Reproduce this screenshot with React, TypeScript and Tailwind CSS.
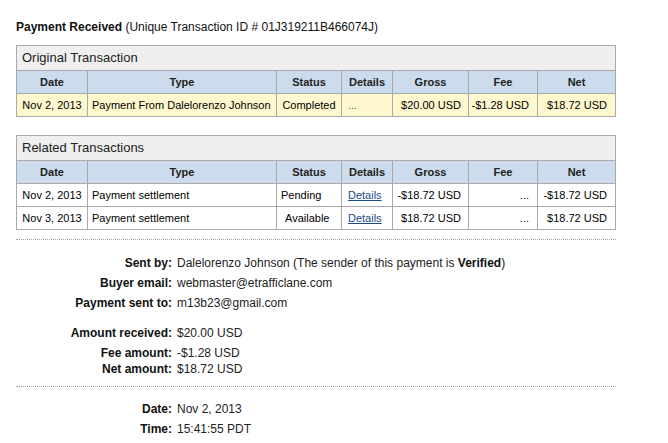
import React from "react";

const cols = "grid grid-cols-[71px_189px_65px_51px_76px_69px_78px]";
const cell = "border-r border-b border-[#a9a9a9] h-[23px] flex items-center text-[11px] leading-[14px] whitespace-nowrap overflow-hidden";
const head = `${cell} justify-center font-bold text-[11px] bg-[#cddcec] text-[#222]`;

function Caption({ title }: { title: string }) {
  return (
    <div className="h-[25px] border-r border-b border-[#a9a9a9] bg-[#efefef] flex items-center pl-[5px] text-[13px] text-[#222]">
      {title}
    </div>
  );
}

function Header() {
  return (
    <div className={cols}>
      <div className={head}>Date</div>
      <div className={head}>Type</div>
      <div className={head}>Status</div>
      <div className={head}>Details</div>
      <div className={head}>Gross</div>
      <div className={head}>Fee</div>
      <div className={head}>Net</div>
    </div>
  );
}

type Row = {
  date: string;
  type: string;
  status: string;
  statusPad: string;
  details: "link" | "dots";
  gross: string;
  fee: string;
  net: string;
};

function DataRow({ r, bg }: { r: Row; bg: string }) {
  return (
    <div className={`${cols} ${bg}`}>
      <div className={`${cell} justify-center`}>{r.date}</div>
      <div className={`${cell} pl-[4px]`}>{r.type}</div>
      <div className={`${cell} ${r.statusPad}`}>{r.status}</div>
      <div className={`${cell} pl-[6px]`}>
        {r.details === "link" ? (
          <span className="text-[#1b4a8c] underline">Details</span>
        ) : (
          <span className="text-[#555]">...</span>
        )}
      </div>
      <div className={`${cell} justify-end pr-[7px]`}>{r.gross}</div>
      <div className={`${cell} justify-end pr-[8px]`}>{r.fee}</div>
      <div className={`${cell} justify-end pr-[8px]`}>{r.net}</div>
    </div>
  );
}

function Info({ label, children, cls = "" }: { label: string; children: React.ReactNode; cls?: string }) {
  return (
    <div className={`flex leading-[20px] text-[12px] ${cls}`}>
      <div className="w-[156px] text-right font-bold text-[#111]">{label}</div>
      <div className="pl-[5px] text-[#222]">{children}</div>
    </div>
  );
}

export default function App() {
  const row1: Row = {
    date: "Nov 2, 2013",
    type: "Payment From Dalelorenzo Johnson",
    status: "Completed",
    statusPad: "justify-center",
    details: "dots",
    gross: "$20.00 USD",
    fee: "-$1.28 USD",
    net: "$18.72 USD",
  };
  const rel: Row[] = [
    {
      date: "Nov 2, 2013",
      type: "Payment settlement",
      status: "Pending",
      statusPad: "pl-[4px]",
      details: "link",
      gross: "-$18.72 USD",
      fee: "...",
      net: "-$18.72 USD",
    },
    {
      date: "Nov 3, 2013",
      type: "Payment settlement",
      status: "Available",
      statusPad: "pl-[8px]",
      details: "link",
      gross: "$18.72 USD",
      fee: "...",
      net: "$18.72 USD",
    },
  ];

  return (
    <div className="w-[668px] h-[443px] bg-white pl-[16px] pt-[19px] text-black overflow-hidden" style={{ fontFamily: '"Liberation Sans", Arial, sans-serif' }}>
      <div className="text-[12px] leading-[16px] text-[#111]">
        <span className="font-bold">Payment Received</span> (Unique Transaction ID # 01J319211B466074J)
      </div>

      <div className="mt-[10px] w-[600px] border-l border-t border-[#a9a9a9]">
        <Caption title="Original Transaction" />
        <Header />
        <DataRow r={row1} bg="bg-[#fff8cf]" />
      </div>

      <div className="mt-[18px] w-[600px] border-l border-t border-[#a9a9a9]">
        <Caption title="Related Transactions" />
        <Header />
        {rel.map((r, i) => (
          <DataRow key={i} r={r} bg="bg-white" />
        ))}
      </div>

      <div className="mt-[9px] w-[600px] border-t border-dotted border-[#a0a0a0]" />

      <div className="mt-[13px] w-[600px]">
        <Info label="Sent by:">
          Dalelorenzo Johnson (The sender of this payment is <span className="font-bold text-[#111]">Verified</span>)
        </Info>
        <Info label="Buyer email:">webmaster@etrafficlane.com</Info>
        <Info label="Payment sent to:">m13b23@gmail.com</Info>
        <Info label="Amount received:" cls="mt-[10px]">$20.00 USD</Info>
        <Info label="Fee amount:">-$1.28 USD</Info>
        <Info label="Net amount:" cls="mt-[-4px]">$18.72 USD</Info>
      </div>

      <div className="mt-[7px] w-[600px] border-t border-dotted border-[#a0a0a0]" />

      <div className="mt-[12px] w-[600px]">
        <Info label="Date:">Nov 2, 2013</Info>
        <Info label="Time:">15:41:55 PDT</Info>
      </div>
    </div>
  );
}
